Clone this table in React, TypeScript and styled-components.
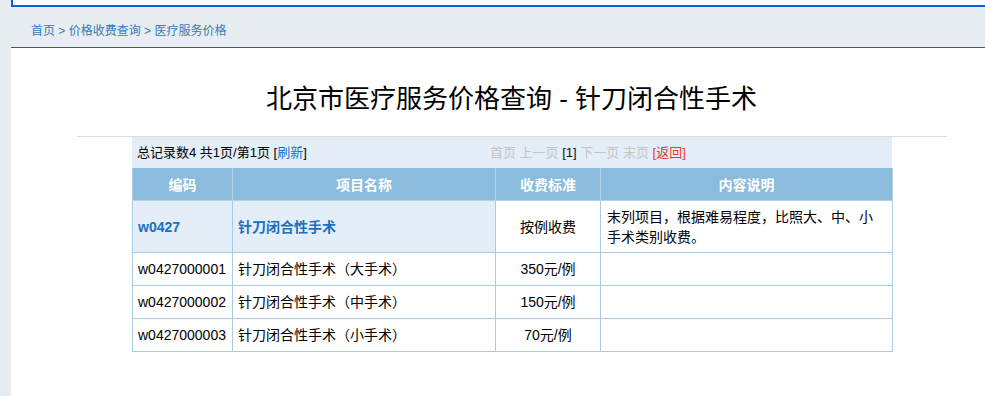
import React from "react";
import styled, { createGlobalStyle } from "styled-components";

const GlobalStyle = createGlobalStyle`
  html, body {
    margin: 0;
    padding: 0;
    background: #e8edf1;
    overflow: hidden;
    font-family: "Liberation Sans", "Noto Sans CJK SC", sans-serif;
  }
`;

const Page = styled.div`
  margin-left: 11px;
  width: 1001px;
  min-height: 396px;
  background: #ffffff;
`;

const TopBox = styled.div`
  height: 5px;
  background: #ffffff;
  border-left: 2px solid #0f5fd6;
  border-bottom: 2px solid #0f5fd6;
`;

const Crumbs = styled.div`
  box-sizing: border-box;
  height: 41px;
  padding: 15px 0 0 20px;
  background: #e8edf1;
  border-bottom: 1px solid #0f5fd6;
  font-size: 12px;
  line-height: 18px;
  color: #3a79b9;
`;

const Crumb = styled.a`
  color: #3a79b9;
  text-decoration: none;
`;

const Title = styled.h1`
  margin: 36px 0 22px;
  font-size: 26px;
  line-height: 30px;
  font-weight: normal;
  text-align: center;
  color: #000;
`;

const Rule = styled.div`
  margin-left: 66px;
  width: 870px;
  height: 1px;
  background: #dddddd;
`;

const Wrap = styled.div`
  margin-left: 121px;
  width: 760px;
`;

const InfoBar = styled.div`
  display: grid;
  grid-template-columns: 358px 1fr;
  align-items: center;
  box-sizing: border-box;
  height: 31px;
  padding-bottom: 2px;
  background: #e3eef8;
  font-size: 13px;
  color: #000;
`;

const Summary = styled.div`
  padding-left: 5px;
`;

const Link = styled.a<{ $tone?: "blue" | "red" }>`
  color: ${(p) => (p.$tone === "red" ? "#e8392a" : "#1a6fc9")};
  text-decoration: none;
`;

const Pager = styled.div`
  color: #c4c4c4;
  white-space: pre;
`;

const Current = styled.span`
  color: #111;
`;

const Table = styled.table`
  width: 760px;
  border-collapse: collapse;
  table-layout: fixed;
  font-size: 14px;
  color: #000;
`;

const Th = styled.th`
  height: 32px;
  padding: 0;
  background: #8bbcde;
  color: #ffffff;
  font-weight: bold;
  font-size: 14px;
  border: 1px solid #b3d2ea;
  border-top: none;
`;

const Td = styled.td<{ $align?: "left" | "center"; $lead?: boolean }>`
  height: 32px;
  padding: 0 5px;
  border: 1px solid #aacbe6;
  text-align: ${(p) => p.$align ?? "left"};
  background: ${(p) => (p.$lead ? "#e3eef8" : "#ffffff")};
  line-height: 20px;
`;

const TallTd = styled(Td)`
  height: 43px;
  padding-top: 4px;
  padding-bottom: 4px;
`;

const NoteTd = styled(TallTd)`
  padding-left: 6px;
  padding-right: 9px;
`;

const Strong = styled.span`
  color: #1a6fc0;
  font-weight: bold;
`;

const rows = [
  { code: "w0427000001", name: "针刀闭合性手术（大手术）", price: "350元/例" },
  { code: "w0427000002", name: "针刀闭合性手术（中手术）", price: "150元/例" },
  { code: "w0427000003", name: "针刀闭合性手术（小手术）", price: "70元/例" },
];

export default function App() {
  return (
    <>
      <GlobalStyle />
      <Page>
        <TopBox />
        <Crumbs>
          <Crumb>首页</Crumb> &gt; <Crumb>价格收费查询</Crumb> &gt; <Crumb>医疗服务价格</Crumb>
        </Crumbs>
        <Title>北京市医疗服务价格查询 - 针刀闭合性手术</Title>
        <Rule />
        <Wrap>
          <InfoBar>
            <Summary>
              总记录数4 共1页/第1页 [<Link>刷新</Link>]
            </Summary>
            <Pager>
              首页 上一页 <Current>[1]</Current> 下一页 末页 <Link $tone="red">[返回]</Link>
            </Pager>
          </InfoBar>
          <Table>
            <colgroup>
              <col style={{ width: 100 }} />
              <col style={{ width: 263 }} />
              <col style={{ width: 105 }} />
              <col style={{ width: 292 }} />
            </colgroup>
            <thead>
              <tr>
                <Th>编码</Th>
                <Th>项目名称</Th>
                <Th>收费标准</Th>
                <Th>内容说明</Th>
              </tr>
            </thead>
            <tbody>
              <tr>
                <TallTd $lead>
                  <Strong>w0427</Strong>
                </TallTd>
                <TallTd $lead>
                  <Strong>针刀闭合性手术</Strong>
                </TallTd>
                <TallTd $align="center">按例收费</TallTd>
                <NoteTd>末列项目，根据难易程度，比照大、中、小手术类别收费。</NoteTd>
              </tr>
              {rows.map((r) => (
                <tr key={r.code}>
                  <Td>{r.code}</Td>
                  <Td>{r.name}</Td>
                  <Td $align="center">{r.price}</Td>
                  <Td />
                </tr>
              ))}
            </tbody>
          </Table>
        </Wrap>
      </Page>
    </>
  );
}
